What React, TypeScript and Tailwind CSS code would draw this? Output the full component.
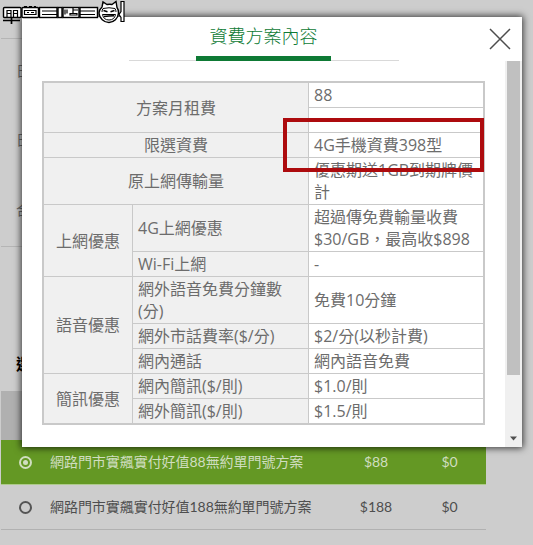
import React from "react";

type CellProps = { children?: React.ReactNode; className?: string };

function Label({ children, className = "" }: CellProps) {
  return (
    <div className={`flex items-center border-r border-[#c9c9c9] bg-[#f0f0f0] ${className}`}>
      <span>{children}</span>
    </div>
  );
}

function Value({ children, className = "border-b" }: CellProps) {
  return (
    <div className={`flex items-center border-[#c9c9c9] bg-white pl-[5px] ${className}`}>
      <span>{children}</span>
    </div>
  );
}

function Watermark() {
  return (
    <svg className="absolute top-0 left-0" width="128" height="26" viewBox="0 0 128 26" fill="none">
      <g fill="#fff" stroke="#000" strokeWidth="1.4">
        <rect x="3.5" y="7.5" width="17.500" height="10" rx="1" />
        <rect x="22" y="7.5" width="16.5" height="10" rx="1" />
        <rect x="39.5" y="7.5" width="17.5" height="10" />
        <rect x="58" y="7.5" width="4" height="10" />
        <rect x="63" y="7.5" width="16" height="10" />
        <rect x="80" y="7.5" width="17.5" height="10" />
      </g>
      <g stroke="#000" strokeWidth="1.2">
        <path d="M7 17V10.500h4V17M13.500 17V10.500h4V17M7 13.500h4M13.500 13.500h4" />
        <path d="M3 20.500h17M11.500 17v7" strokeWidth="1.7" />
        <path d="M24.500 10.500h11.500v4h-11.500zM27 12.500h2M31 12.500h3M24 6.500h3M29 6.500h3M34 6.500h2" />
        <path d="M42 11h15M42 14.500h15M80 11h15M80 14.500h15" />
        <path d="M65 9.500v5M67 9.500v4M70 13.500h7v1.500h-7zM73 7v6M73 10h5" />
      </g>
      <path d="M102 7L103 2l4 2.500q3-.6 5 0l4-3 1 6q1.800 2.500 1.500 5.500c-.6 5.500-4.500 9.500-9.500 9.500s-9.700-4-10-9.500q-.1-3 3-6z" fill="#fff" stroke="#000" strokeWidth="1.4" />
      <path d="M103 8.500q6-1.500 12 0M102 12q0-2 1-3.500M116 12q0-2-1-3.500M102.500 14.500h13q-1 5.500-6.500 5.500t-6.500-5.500z" stroke="#000" strokeWidth="1" />
      <path d="M103.500 10.500l4 1.200M114.500 10.500l-4 1.200M104 16.500q5-.5 10-.8" stroke="#000" strokeWidth="1.500" />
      <path d="M121 1.500h3v20h-3v-4l-2-3 2-3z" fill="#fff" stroke="#000" strokeWidth="1.2" />
    </svg>
  );
}

function PlanRow({ selected, name, fee, price }: { selected?: boolean; name: string; fee: string; price: string }) {
  return (
    <div className={`flex h-[45px] w-[485px] shrink-0 items-center border-b font-['Lato','Noto_Sans_CJK_TC',sans-serif] text-[14px] tracking-[-0.05px] ${selected ? "border-[#aeca8b] bg-[#649824] text-[#d0dec0]" : "border-[#b1b1b1] text-[#4e4e4e]"}`}>
      <div className="flex w-[49px] shrink-0 pl-[18px]">
        <span className={`flex size-[13px] items-center justify-center rounded-full border-2 ${selected ? "border-[#d0dec0]" : "border-[#555]"}`}>
          {selected && <span className="size-[5px] rounded-full bg-[#d0dec0]" />}
        </span>
      </div>
      <div className="w-[289px] shrink-0 whitespace-nowrap">{name}</div>
      <div className="w-[74px] text-center">{fee}</div>
      <div className="w-[73px] text-center">{price}</div>
    </div>
  );
}

export default function App() {
  return (
    <div className="relative h-[545px] w-[533px] overflow-hidden bg-[#cdcdcd] font-['Open_Sans','Noto_Sans_CJK_TC',sans-serif] text-[#6c6c6c]">
      <div className="flex h-full flex-col pl-px text-[14px] leading-[20px]">
        <div className="h-[39px] w-[485px] border-b border-[#b5b5b5]" />
        <div className="flex h-[208px] w-[485px] flex-col border-b border-[#b5b5b5] pt-[22px] pl-[15px]">
          <div className="h-[69px]">日</div>
          <div className="h-[70px]">日</div>
          <div>合</div>
        </div>
        <div className="h-[144px] pt-[107px] pl-[15px] text-[16px] font-bold text-black">選擇方案</div>
        <div className="h-[49px] w-[485px] bg-[#b0b0b0]" />
        <PlanRow selected name="網路門市實飆實付好值88無約單門號方案" fee="$88" price="$0" />
        <PlanRow name="網路門市實飆實付好值188無約單門號方案" fee="$188" price="$0" />
      </div>

      <div className="absolute top-[17px] left-[22px] flex h-[430px] w-[500px] flex-col bg-white shadow-[0_0_7px_1px_rgba(0,0,0,0.75)]">
        <div className="flex h-[44px] shrink-0">
          <div className="ml-[107px] flex w-[270px] border-b border-[#d9d9d9] pl-[67px]">
            <div className="-mb-px flex h-[44px] w-[135px] justify-center border-b-[5px] border-[#0e7a35] pt-[6px] text-[18px] leading-[26px] font-light whitespace-nowrap text-[#0e7a35]">資費方案內容</div>
          </div>
          <svg className="mt-[11px] ml-[90px]" width="22" height="22" viewBox="0 0 22 22">
            <path d="M1 1L21 21M21 1L1 21" stroke="#4d4d4d" strokeWidth="1.5" />
          </svg>
        </div>
        <div className="flex flex-1">
          <div className="mt-[20px] ml-[20px] grid h-[344px] w-[443px] grid-cols-[89px_176px_174px] grid-rows-[25px_25px_25px_47px_47px_25px_47px_25px_25px_25px_24px] border-2 border-[#c9c9c9] text-[16px] leading-[22px]">
            <Label className="col-span-2 row-span-2 justify-center border-b">方案月租費</Label>
            <Value>88</Value>
            <Value />
            <Label className="col-span-2 justify-center border-b">限選資費</Label>
            <Value>4G手機資費398型</Value>
            <Label className="col-span-2 justify-center border-b">原上網傳輸量</Label>
            <Value>優惠期送1GB到期牌價<br />計</Value>
            <Label className="row-span-2 justify-center border-b">上網優惠</Label>
            <Label className="border-b pl-[5px]">4G上網優惠</Label>
            <Value>超過傳免費輸量收費<br />$30/GB，最高收$898</Value>
            <Label className="border-b pl-[5px]">Wi-Fi上網</Label>
            <Value>-</Value>
            <Label className="row-span-3 justify-center border-b">語音優惠</Label>
            <Label className="border-b pl-[5px]">網外語音免費分鐘數<br />(分)</Label>
            <Value>免費10分鐘</Value>
            <Label className="border-b pl-[5px]">網外市話費率($/分)</Label>
            <Value>$2/分(以秒計費)</Value>
            <Label className="border-b pl-[5px]">網內通話</Label>
            <Value>網內語音免費</Value>
            <Label className="row-span-2 justify-center">簡訊優惠</Label>
            <Label className="border-b pl-[5px]">網內簡訊($/則)</Label>
            <Value>$1.0/則</Value>
            <Label className="pl-[5px]">網外簡訊($/則)</Label>
            <Value className="">$1.5/則</Value>
          </div>
          <div className="ml-auto flex w-[17px] flex-col items-center bg-[#f0f0f0]">
            <div className="h-[314px] w-[13px] bg-[#c0c0c0]" />
            <svg className="mt-auto mb-[6px]" width="7" height="5" viewBox="0 0 7 5">
              <path d="M0 0.500h7L3.500 4.500z" fill="#505050" />
            </svg>
          </div>
        </div>
      </div>

      <div className="absolute top-[118px] left-[283px] h-[54px] w-[201px] border-4 border-[#ad0b0e]" />
      <Watermark />
    </div>
  );
}
